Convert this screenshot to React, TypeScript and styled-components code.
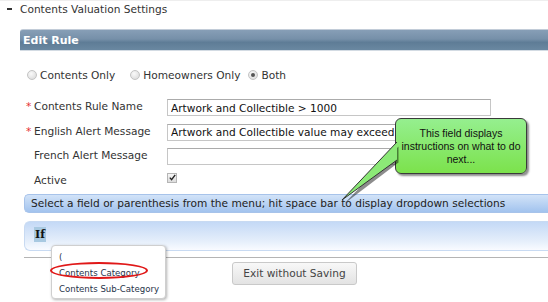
import styled, { createGlobalStyle } from 'styled-components';

const GlobalStyle = createGlobalStyle`
  html, body {
    margin: 0;
    padding: 0;
    background: #fff;
  }
  body {
    font-family: 'DejaVu Sans', Verdana, sans-serif;
    font-size: 10.6px;
    color: #333;
  }
`;

const Page = styled.div`
  position: relative;
  width: 548px;
  height: 302px;
  overflow: hidden;
  border-top: 1px solid #eee;
  box-sizing: border-box;
`;

const SectionTitle = styled.div`
  display: flex;
  align-items: center;
  gap: 8px;
  height: 16px;
  padding-left: 7px;
  color: #333;
`;

const Minus = styled.span`
  width: 5px;
  height: 2px;
  background: #333;
`;

const Panel = styled.div`
  margin: 12px 0 0 20px;
`;

const EditRuleBar = styled.div`
  height: 20px;
  display: flex;
  align-items: center;
  padding-left: 3px;
  border-top: 1px solid #c2ccd8;
  border-bottom: 1px solid #d3dbe3;
  border-radius: 3px 0 0 0;
  background: linear-gradient(#879eb6 0%, #7690a9 45%, #5e7c96 62%, #6a88a1 100%);
  color: #fff;
  font-weight: bold;
  font-size: 11px;
`;

const Body = styled.div`
  padding-left: 4px;
`;

const RadioRow = styled.div`
  display: flex;
  align-items: center;
  height: 16px;
  margin-top: 16px;
  padding-left: 3px;
`;

const RadioOption = styled.label<{ $space?: number }>`
  display: flex;
  align-items: center;
  gap: 3px;
  margin-right: ${(p) => p.$space ?? 0}px;
`;

const RadioDot = styled.span<{ $checked?: boolean }>`
  position: relative;
  width: 8px;
  height: 8px;
  border-radius: 50%;
  border: 1px solid #c4c4c4;
  background: radial-gradient(circle at 40% 35%, #fafafa, #d6d6d6);
  &::after {
    content: '';
    display: ${(p) => (p.$checked ? 'block' : 'none')};
    position: absolute;
    left: 2px;
    top: 2px;
    width: 4px;
    height: 4px;
    border-radius: 50%;
    background: #555;
  }
`;

const FormGrid = styled.div`
  display: grid;
  grid-template-columns: 143px 324px;
  grid-auto-rows: 17px;
  row-gap: 7.5px;
  margin-top: 16px;
`;

const Label = styled.div`
  display: flex;
  align-items: center;
  padding-left: 2px;
  margin-top: -3px;
  color: #333;
`;

const Star = styled.span`
  width: 8px;
  color: #e53030;
`;

const TextField = styled.input`
  box-sizing: border-box;
  height: 17px;
  width: 100%;
  margin: 0;
  padding: 0 3px;
  border: 1px solid #c6c6c6;
  border-top-color: #ababab;
  font: inherit;
  color: #111;
  background: #fff;
`;

const CheckBox = styled.span`
  display: flex;
  align-items: center;
  justify-content: center;
  width: 8px;
  height: 8px;
  border: 1px solid #b5b5b5;
  background: linear-gradient(#f6f6f6, #dcdcdc);
`;

const InstructionBar = styled.div`
  display: flex;
  align-items: center;
  height: 17px;
  margin-top: 4px;
  padding-left: 6px;
  border: 1px solid #a7c3ea;
  border-right: none;
  border-radius: 5px 0 0 5px;
  background: linear-gradient(#d2e3f8, #a2c3ee);
  color: #222;
`;

const IfBox = styled.div`
  height: 30px;
  margin-top: 8px;
  padding: 5px 0 0 9px;
  box-sizing: border-box;
  border: 1px solid #c8daf2;
  border-right: none;
  border-radius: 6px 0 0 6px;
  background: linear-gradient(#c4d9f6, #e6effb 70%, #f9fbff);
`;

const IfChip = styled.span`
  display: inline-block;
  padding: 0 1px;
  line-height: 15px;
  background: #a8c9e1;
  color: #111;
  font-family: 'DejaVu Serif', 'Liberation Serif', serif;
  font-weight: bold;
  font-size: 11px;
`;

const Separator = styled.div`
  margin-top: 6px;
  border-top: 1px solid #b4b4b4;
`;

const ButtonRow = styled.div`
  display: flex;
  padding: 4px 0 0 208px;
`;

const Button = styled.button`
  width: 125px;
  height: 23px;
  border: 1px solid #c9c9c9;
  border-radius: 3px;
  background: linear-gradient(#f8f8f8, #e3e3e3);
  font: inherit;
  color: #444;
  padding: 0;
`;

const Dropdown = styled.div`
  position: absolute;
  left: 51px;
  top: 244px;
  width: 115px;
  height: 54px;
  box-sizing: border-box;
  padding: 3px 0 0 7px;
  background: #fff;
  border: 1px solid #cfcfcf;
  border-radius: 4px;
  box-shadow: 1px 1px 3px rgba(0, 0, 0, 0.3);
`;

const DropItem = styled.div`
  line-height: 16px;
  font-size: 8.6px;
  color: #27344a;
  white-space: nowrap;
`;

const Highlight = styled.div`
  position: absolute;
  left: 50px;
  top: 261px;
  width: 98px;
  height: 17px;
  box-sizing: border-box;
  border: 2px solid #e01818;
  border-radius: 50%;
`;

const Callout = styled.div`
  position: absolute;
  left: 395px;
  top: 117px;
  width: 132px;
  height: 56px;
  box-sizing: border-box;
  padding-top: 8px;
  border: 1px solid #3a3a3a;
  border-radius: 6px;
  background: linear-gradient(#95ef8f, #7ce24c);
  box-shadow: 2px 2px 2px rgba(0, 0, 0, 0.45);
  font-family: 'Liberation Sans', Arial, sans-serif;
  font-size: 10.5px;
  line-height: 13px;
  color: #111;
  text-align: center;
`;

const CalloutTail = styled.svg`
  position: absolute;
  left: -57px;
  top: 20px;
  overflow: visible;
`;

export default function App() {
  return (
    <Page>
      <GlobalStyle />
      <SectionTitle>
        <Minus />
        Contents Valuation Settings
      </SectionTitle>
      <Panel>
        <EditRuleBar>Edit Rule</EditRuleBar>
        <Body>
          <RadioRow>
            <RadioOption $space={15}>
              <RadioDot />
              Contents Only
            </RadioOption>
            <RadioOption $space={8}>
              <RadioDot />
              Homeowners Only
            </RadioOption>
            <RadioOption>
              <RadioDot $checked />
              Both
            </RadioOption>
          </RadioRow>

          <FormGrid>
            <Label>
              <Star>*</Star>Contents Rule Name
            </Label>
            <TextField readOnly value="Artwork and Collectible > 1000" />
            <Label>
              <Star>*</Star>English Alert Message
            </Label>
            <TextField readOnly value="Artwork and Collectible value may exceed" />
            <Label>
              <Star />French Alert Message
            </Label>
            <TextField readOnly value="" />
            <Label>
              <Star />Active
            </Label>
            <div>
              <CheckBox>
                <svg width="7" height="7" viewBox="0 0 7 7">
                  <path d="M0.8 3.6 L2.6 5.6 L6.2 0.9" stroke="#222" strokeWidth="1.4" fill="none" />
                </svg>
              </CheckBox>
            </div>
          </FormGrid>

          <InstructionBar>
            Select a field or parenthesis from the menu; hit space bar to display dropdown selections
          </InstructionBar>

          <IfBox>
            <IfChip>If</IfChip>
          </IfBox>

          <Separator />

          <ButtonRow>
            <Button type="button">Exit without Saving</Button>
          </ButtonRow>
        </Body>
      </Panel>

      <Dropdown>
        <DropItem>(</DropItem>
        <DropItem>Contents Category</DropItem>
        <DropItem>Contents Sub-Category</DropItem>
      </Dropdown>
      <Highlight />

      <Callout>
        <CalloutTail width="60" height="64" viewBox="0 0 60 64">
          <path d="M4 63 L58 22 L58 6 Z" fill="rgba(0,0,0,0.45)" transform="translate(1.5,1.5)" />
          <path d="M3 61 L58 21 L58 3 Z" fill="#8ce977" />
          <path d="M58 3 L3 61 L58 21" stroke="#333" strokeWidth="1" fill="none" />
        </CalloutTail>
        This field displays
        <br />
        instructions on what to do
        <br />
        next...
      </Callout>
    </Page>
  );
}
